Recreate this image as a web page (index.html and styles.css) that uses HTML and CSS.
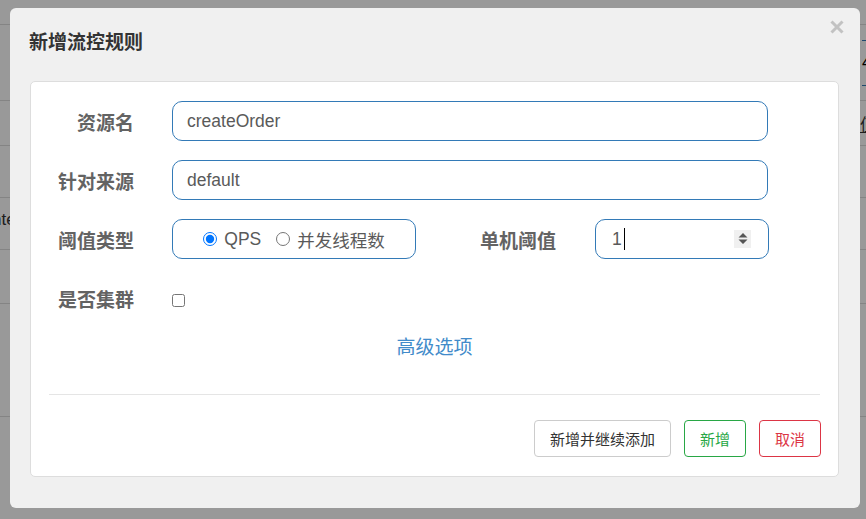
FILE: index.html
```html
<!DOCTYPE html>
<html>
    <head>
        <title>新增流控规则</title>
        <link rel="stylesheet" href="styles.css">
    </head>
    <body>
        <div class="bg-table">
            <div class="bg-row row-a"></div>
            <div class="bg-row row-b"><span></span><span class="bg-btn">4</span></div>
            <div class="bg-row row-c"><span></span><span class="bg-link">值</span></div>
            <div class="bg-row row-d"></div>
            <div class="bg-row row-e"><span class="bg-cut">nte</span><span></span></div>
            <div class="bg-row row-f"></div>
            <div class="bg-row row-g"></div>
        </div>
        <div class="backdrop"></div>

        <div class="modal">
            <div class="modal-header">
                <h4 class="modal-title">新增流控规则</h4>
                <span class="close">
                    <svg width="14" height="14" viewBox="0 0 14 14">
                        <path d="M1.5 1.5 L12.5 12.5 M12.5 1.5 L1.5 12.5" stroke="#c2c2c2" stroke-width="3" fill="none"/>
                    </svg>
                </span>
            </div>
            <div class="panel">
                <div class="form-row">
                    <label class="form-label">资源名</label>
                    <input class="form-control" type="text" value="createOrder">
                </div>
                <div class="form-row">
                    <label class="form-label">针对来源</label>
                    <input class="form-control" type="text" value="default">
                </div>
                <div class="form-row">
                    <label class="form-label">阈值类型</label>
                    <div class="radio-box">
                        <label class="radio"><input type="radio" name="grade" checked>QPS</label>
                        <label class="radio"><input type="radio" name="grade">并发线程数</label>
                    </div>
                    <label class="form-label form-label-right">单机阈值</label>
                    <div class="number-box">
                        <span class="number-value">1</span><span class="caret"></span>
                        <span class="spinner">
                            <svg width="16" height="17" viewBox="0 0 16 17">
                                <path d="M8 3 L12.5 7.5 L3.5 7.5 Z M3.5 9.5 L12.5 9.5 L8 14 Z" fill="#555"/>
                            </svg>
                        </span>
                    </div>
                </div>
                <div class="form-row">
                    <label class="form-label">是否集群</label>
                    <input class="checkbox" type="checkbox">
                </div>
                <div class="advanced">
                    <a href="#">高级选项</a>
                </div>
                <hr class="divider">
                <div class="buttons-container">
                    <button class="btn btn-default">新增并继续添加</button>
                    <button class="btn btn-success">新增</button>
                    <button class="btn btn-danger">取消</button>
                </div>
            </div>
        </div>
    </body>
</html>
```

FILE: styles.css
```css
body {
    margin: 0;
    font-family: "Liberation Sans", "Noto Sans CJK SC", sans-serif;
    background-color: #fff;
    overflow: hidden;
}

/* page behind the dialog */
.bg-table {
    width: 866px;
}

.bg-row {
    display: flex;
    justify-content: space-between;
    align-items: center;
    border-bottom: 1px solid #ddd;
    box-sizing: border-box;
    font-size: 17px;
    color: #333;
}

.row-a { height: 25px; }
.row-b { height: 76px; }
.row-c { height: 45px; }
.row-d { height: 52px; }
.row-e { height: 52px; }
.row-f { height: 54px; }
.row-g { height: 113px; }

.bg-btn {
    display: block;
    width: 40px;
    height: 44px;
    line-height: 44px;
    border-top: 1px solid #337ab7;
    border-bottom: 1px solid #337ab7;
    margin-right: -36px;
    color: #000;
}

.bg-link {
    margin-right: -14px;
    text-decoration: underline;
    width: 20px;
}

.bg-cut {
    margin-left: -8px;
    margin-bottom: 8px;
}

.backdrop {
    position: absolute;
    top: 0;
    left: 0;
    right: 0;
    bottom: 0;
    background-color: rgba(0, 0, 0, 0.4);
}

/* dialog */
.modal {
    position: absolute;
    top: 8px;
    left: 10px;
    width: 850px;
    height: 500px;
    background-color: #f0f0f0;
    border-radius: 6px;
    box-sizing: border-box;
}

.modal-header {
    position: relative;
    padding: 20px 19px 27px 19px;
}

.modal-title {
    margin: 0;
    font-family: "Noto Sans CJK SC", sans-serif;
    font-size: 19px;
    line-height: 26px;
    font-weight: bold;
    color: #333;
}

.close {
    position: absolute;
    top: 12px;
    right: 16px;
    display: block;
    width: 14px;
    height: 14px;
}

.close svg {
    display: block;
}

.panel {
    margin: 0 21px 0 20px;
    height: 396px;
    box-sizing: border-box;
    background-color: #fff;
    border: 1px solid #ddd;
    border-radius: 5px;
    padding: 19px 70px 0 0;
}

.form-row {
    display: flex;
    align-items: center;
    height: 40px;
    margin-bottom: 19px;
}

.form-label {
    flex: 0 0 103px;
    text-align: right;
    margin-right: 38px;
    font-family: "Noto Sans CJK SC", sans-serif;
    font-size: 19px;
    font-weight: bold;
    color: #636363;
}

.form-label-right {
    flex: 0 0 140px;
    margin-right: 39px;
}

.form-control {
    flex: 1;
    height: 40px;
    box-sizing: border-box;
    border: 1px solid #337ab7;
    border-radius: 10px;
    padding: 0 14px;
    font-family: "Liberation Sans", "Noto Sans CJK SC", sans-serif;
    font-size: 17.5px;
    color: #5a5a5a;
    outline: none;
}

.radio-box {
    flex: 0 0 244px;
    height: 40px;
    box-sizing: border-box;
    border: 1px solid #337ab7;
    border-radius: 10px;
    display: flex;
    align-items: center;
    justify-content: center;
    gap: 15px;
    font-size: 17.5px;
    color: #5a5a5a;
}

.radio {
    display: flex;
    align-items: center;
    white-space: nowrap;
}

.radio input {
    margin: 0 7px 0 0;
    width: 14px;
    height: 14px;
}

.number-box {
    flex: 0 0 174px;
    height: 40px;
    box-sizing: border-box;
    border: 1px solid #337ab7;
    border-radius: 10px;
    display: flex;
    align-items: center;
    padding: 0 17px 0 16px;
    font-size: 17.5px;
    color: #5a5a5a;
}

.caret {
    display: block;
    width: 1px;
    height: 22px;
    margin-left: 2px;
    background-color: #000;
}

.spinner {
    margin-left: auto;
    display: block;
    width: 17px;
    height: 18px;
    background-color: #f0f0f0;
}

.spinner svg {
    display: block;
    margin: 0 auto;
}

.checkbox {
    margin: 4px 0 0 0;
    width: 13px;
    height: 13px;
}

.advanced {
    text-align: center;
    margin: -4px -70px 0 0;
    line-height: 26px;
}

.advanced a {
    font-family: "Noto Sans CJK SC", sans-serif;
    font-size: 19px;
    color: #428bca;
    text-decoration: none;
}

.divider {
    margin: 32px -52px 0 18px;
    border: none;
    border-top: 1px solid #e5e5e5;
}

.buttons-container {
    display: flex;
    justify-content: flex-end;
    gap: 13px;
    margin: 25px -53px 0 0;
}

.btn {
    height: 37px;
    padding: 0 15px;
    border-radius: 4px;
    background-color: #fff;
    font-family: "Noto Sans CJK SC", sans-serif;
    font-size: 15px;
    cursor: pointer;
}

.btn-default {
    border: 1px solid #ccc;
    color: #333;
}

.btn-success {
    border: 1px solid #28a745;
    color: #28a745;
    width: 62px;
}

.btn-danger {
    border: 1px solid #dc3545;
    color: #dc3545;
    width: 62px;
}
```
